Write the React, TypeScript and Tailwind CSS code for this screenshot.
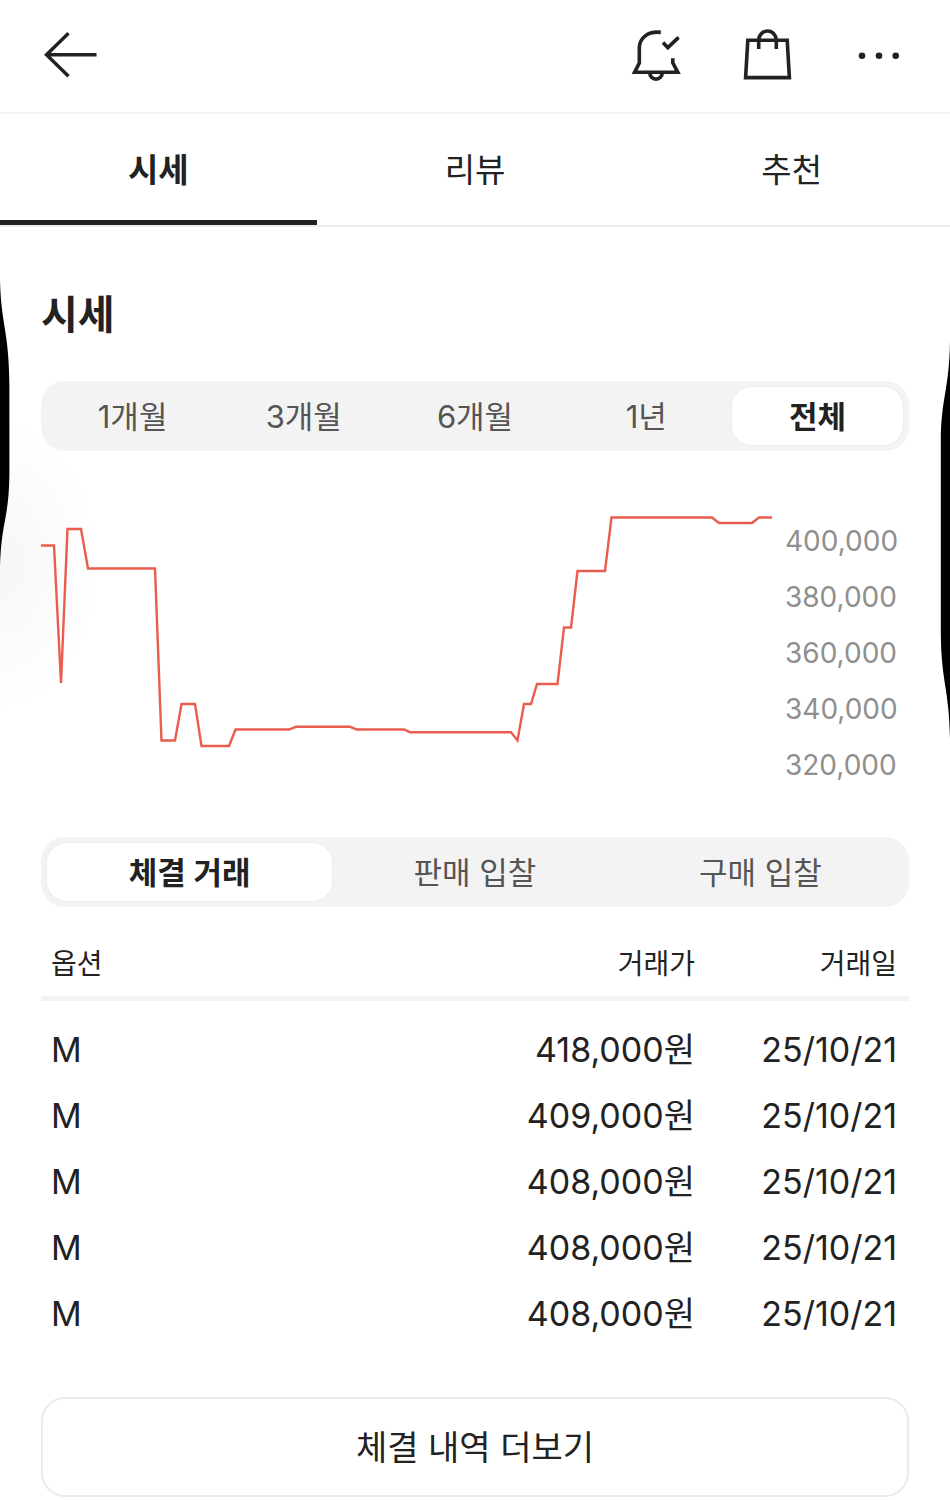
import { useState } from "react";
import clsx from "clsx";

const TABS = ["시세", "리뷰", "추천"];
const PERIODS = ["1개월", "3개월", "6개월", "1년", "전체"];
const KINDS = ["체결 거래", "판매 입찰", "구매 입찰"];
const LEVELS = ["400,000", "380,000", "360,000", "340,000", "320,000"];

const TRADES = [
  { option: "M", price: "418,000원", date: "25/10/21" },
  { option: "M", price: "409,000원", date: "25/10/21" },
  { option: "M", price: "408,000원", date: "25/10/21" },
  { option: "M", price: "408,000원", date: "25/10/21" },
  { option: "M", price: "408,000원", date: "25/10/21" },
];

const PRICE_LINE =
  "0,32.5 13,32.5 20,170 26.5,16 40,16 47,55.5 114,55.5 120.5,227.5 134,227.5 140.5,191 154,191 160.5,233 188,233 194.5,216.5 248,216.5 255,213.8 309,213.8 316,216.5 363,216.5 369,219.2 470,219.2 476.5,227.5 483,191 490,191 496,171 516.5,171 523,114.5 530,114.5 536.5,58 564,58 570.5,4.5 671,4.5 678,10 711,10 718,4.5 731,4.5";

function BackIcon() {
  return (
    <svg viewBox="41 28 56 56" className="size-14" fill="none" stroke="currentColor" strokeWidth="3.4" aria-hidden>
      <path d="M96.5 54.7H46.5M68.5 33.2L46.5 54.7L68.5 76.2" />
    </svg>
  );
}

function BellIcon() {
  return (
    <svg viewBox="629 28 56 56" className="size-14" fill="none" stroke="currentColor" strokeWidth="3.6" aria-hidden>
      <path d="M660.8 32.4C648 30.8 639.3 38 639.3 48V63L634.6 72.3H677.8L672.8 62.8V58.3" />
      <path d="M649.7 72.5A6.3 6.6 0 0 0 662.3 72.5" />
      <path d="M663 42.6L667.8 47.6L678.6 37.4" />
    </svg>
  );
}

function BagIcon() {
  return (
    <svg viewBox="741 28 56 56" className="size-14" fill="none" stroke="currentColor" strokeWidth="3.6" aria-hidden>
      <path d="M747.8 40.2H787.2L789.4 77.6H745.6Z" />
      <path d="M758.7 49V40A8.8 9 0 0 1 776.3 40V49" />
    </svg>
  );
}

function MoreIcon() {
  return (
    <svg viewBox="853 28 56 56" className="size-14" fill="currentColor" aria-hidden>
      <circle cx="862" cy="55.7" r="3.3" />
      <circle cx="879" cy="55.7" r="3.3" />
      <circle cx="895.7" cy="55.7" r="3.3" />
    </svg>
  );
}

type SegmentedProps = {
  label: string;
  items: string[];
  value: string;
  onChange: (v: string) => void;
};

function Segmented({ label, items, value, onChange }: SegmentedProps) {
  return (
    <div role="group" aria-label={label} className="flex h-[70px] rounded-3xl bg-[#f3f3f3] p-1.5 text-[31px]">
      {items.map((item) => (
        <button
          key={item}
          type="button"
          aria-pressed={item === value}
          onClick={() => onChange(item)}
          className={clsx(
            "flex-1 rounded-[20px] leading-none",
            item === value
              ? "bg-white font-semibold text-[#222] shadow-[0_0_2px_rgba(0,0,0,0.08)]"
              : "text-[#555]"
          )}
        >
          {item}
        </button>
      ))}
    </div>
  );
}

export default function App() {
  const [tab, setTab] = useState("시세");
  const [period, setPeriod] = useState("전체");
  const [kind, setKind] = useState("체결 거래");

  return (
    <div className="relative min-h-screen overflow-hidden bg-white font-['Inter','Noto_Sans_CJK_KR',sans-serif] text-[#222]">
      {/* soft shade and black edges at both sides */}
      <div
        className="pointer-events-none absolute top-[420px] left-0 h-72 w-24 bg-[radial-gradient(ellipse_at_left,#f6f6f6_0%,#ffffff_72%)]"
        aria-hidden
      />
      <svg viewBox="0 0 10 290" className="pointer-events-none absolute top-[280px] left-0 h-[290px] w-[10px]" aria-hidden>
        <path d="M0 0C1 45 9 50 9.4 105V190C9.4 240 1 240 0 290Z" />
      </svg>
      <svg viewBox="0 0 10 396" className="pointer-events-none absolute top-[342px] right-0 h-[396px] w-[10px]" aria-hidden>
        <path d="M10 0C9 50 1 55 0.8 100V290C1 340 9 345 10 396Z" />
      </svg>

      <header className="flex h-[114px] items-center justify-between border-b-2 border-[#f3f3f3] px-[41px]">
        <button type="button" aria-label="뒤로">
          <BackIcon />
        </button>
        <div className="flex gap-14">
          <button type="button" aria-label="알림">
            <BellIcon />
          </button>
          <button type="button" aria-label="장바구니">
            <BagIcon />
          </button>
          <button type="button" aria-label="메뉴">
            <MoreIcon />
          </button>
        </div>
      </header>

      <nav className="flex h-[113px] border-b-2 border-[#eee] text-[33px]">
        {TABS.map((t) => (
          <button
            key={t}
            type="button"
            aria-current={t === tab ? "page" : undefined}
            onClick={() => setTab(t)}
            className={clsx(
              "flex-1 border-b-[5px] pt-2",
              t === tab ? "border-[#222] font-bold" : "border-transparent"
            )}
          >
            {t}
          </button>
        ))}
      </nav>

      <main className="relative px-[41px] pt-[58px]">
        <h1 className="text-[40px] leading-[60px] font-semibold">시세</h1>

        <div className="mt-9">
          <Segmented label="기간" items={PERIODS} value={period} onChange={setPeriod} />
        </div>

        <div className="mt-[62px] flex">
          <svg
            viewBox="0 0 732 280"
            preserveAspectRatio="none"
            className="h-[280px] min-w-0 flex-1"
            fill="none"
            role="img"
            aria-label="시세"
          >
            <polyline points={PRICE_LINE} stroke="#ea5c4e" strokeWidth="2.4" />
          </svg>
          <ul className="w-[136px] pl-3 text-[28px] leading-[56px] text-[#8f8f8f]">
            {LEVELS.map((l) => (
              <li key={l}>{l}</li>
            ))}
          </ul>
        </div>

        <div className="mt-11">
          <Segmented label="거래 종류" items={KINDS} value={kind} onChange={setKind} />
        </div>

        <table className="mt-6 w-full border-separate border-spacing-0">
          <thead className="text-[28px]">
            <tr className="h-[70px]">
              <th className="border-b-[5px] border-[#f3f3f3] pl-2.5 text-left font-normal">옵션</th>
              <th className="border-b-[5px] border-[#f3f3f3] text-right font-normal">거래가</th>
              <th className="w-[214px] border-b-[5px] border-[#f3f3f3] pr-3 text-right font-normal">거래일</th>
            </tr>
          </thead>
          <tbody className="text-[34px] leading-[66px] before:block before:h-4 before:content-['']">
            {TRADES.map((t, i) => (
              <tr key={i}>
                <td className="py-0 pl-2.5">{t.option}</td>
                <td className="py-0 text-right">{t.price}</td>
                <td className="py-0 pr-3 text-right">{t.date}</td>
              </tr>
            ))}
          </tbody>
        </table>

        <button
          type="button"
          className="mt-[50px] h-[100px] w-full rounded-3xl border-2 border-[#ebebeb] text-[34px]"
        >
          체결 내역 더보기
        </button>
      </main>
    </div>
  );
}
